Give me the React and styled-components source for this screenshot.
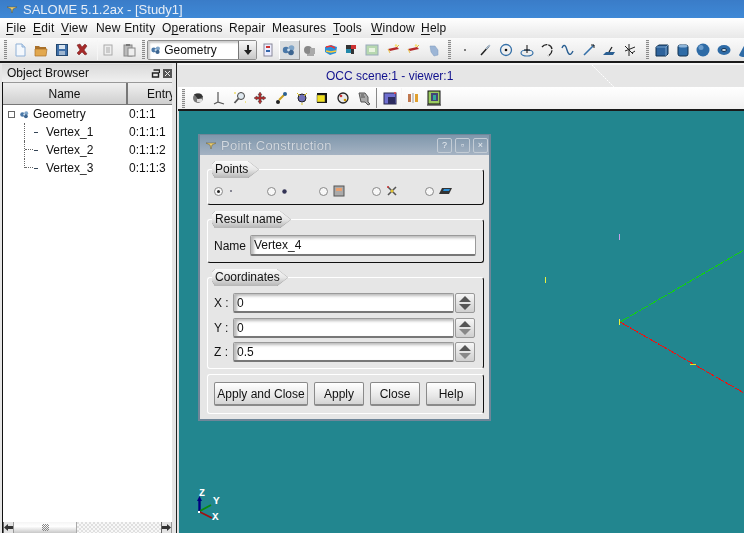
import React from "react";
import styled, { createGlobalStyle, css } from "styled-components";

const Global = createGlobalStyle`
  html, body { margin: 0; padding: 0; background: #e6e6e6; overflow: hidden; }
  #root { width: 744px; height: 533px; }
  * { box-sizing: border-box; }
`;

const soft = css`filter: blur(0.4px);`;

const Window = styled.div`
  position: relative; width: 744px; height: 533px; overflow: hidden;
  display: flex; flex-direction: column; background: #e6e6e6;
  font-family: "Liberation Sans", Arial, sans-serif; font-size: 12px; color: #111;
`;
const TitleBar = styled.div`
  height: 18px; flex: none; display: flex; align-items: center; padding-left: 7px; gap: 6px; ${soft}
  background: linear-gradient(#3a7cc8, #3f89d6); color: #e8eef6; font-size: 13px;
`;
const MenuBar = styled.div`
  height: 20px; flex: none; display: flex; align-items: center; padding-left: 6px; letter-spacing: 0.2px; ${soft}
  background: linear-gradient(#fff, #f1f1f1 60%, #e8e8e8); 
`;
const MenuItem = styled.span`
  width: ${p => p.$w}px; flex: none; white-space: nowrap;
  u { text-underline-offset: 2px; }
`;
const MainToolbar = styled.div`
  height: 25px; flex: none; display: flex; align-items: center; padding-left: 4px; ${soft}
  background: linear-gradient(#fafafa, #ededed 70%, #e4e4e4); border-bottom: 2px solid #1a1a1a;
`;
const Grip = styled.div`
  width: 3px; height: 19px; flex: none; margin-left: ${p => p.$ml || 0}px; margin-right: ${p => p.$mr || 0}px;
  background: repeating-linear-gradient(#8a8a8a 0 1px, #e8e8e8 1px 2px);
`;
const Sep = styled.div`
  width: 1px; height: ${p => p.$h || 20}px; flex: none; background: ${p => p.$c || "#bdbdbd"};
  margin-left: ${p => p.$ml || 0}px; margin-right: ${p => p.$mr || 0}px;
`;
const Tool = styled.div`
  width: ${p => p.$w || 20.7}px; height: ${p => (p.$active ? 20 : 18)}px; flex: none; display: flex;
  align-items: center; justify-content: center;
  ${p => p.$active && "background:#d9dde0; border:1px solid #fff; border-bottom-color:#999; border-right-color:#999;"}
  svg { display: block; }
`;
const Combo = styled.div`
  width: 110px; height: 20px; flex: none; margin-right: 1px; display: flex; align-items: stretch;
  border: 1px solid #8e8e8e; border-radius: 2px; background: #fff;
`;
const ComboText = styled.div`
  flex: 1; display: flex; align-items: center; gap: 2px; padding-left: 2px; font-size: 12px;
  box-shadow: inset 2px 2px 2px #ccc;
`;
const ComboArrow = styled.div`
  width: 18px; display: flex; align-items: center; justify-content: center;
  border-left: 1px solid #777; background: linear-gradient(#f8f8f8, #c8c8c8);
`;

const Body = styled.div`flex: 1; display: flex; min-height: 0;`;
const LeftPanel = styled.div`
  width: 177px; flex: none; display: flex; flex-direction: column; padding-left: 2px; ${soft}
  border-right: 1px solid #222; background: #e6e6e6;
`;
const DockHeader = styled.div`
  height: 18px; flex: none; display: flex; align-items: center; justify-content: space-between;
  margin: 1px 4px 0 0; padding: 0 0 0 5px; background: linear-gradient(#d9d9d9, #f0f0f0);
`;
const DockButtons = styled.div`display: flex; gap: 3px;`;
const Tree = styled.div`
  flex: 1; margin-right: 4px; display: flex; flex-direction: column; background: #fff;
  border-left: 1px solid #111; min-height: 0;
`;
const HeaderRow = styled.div`
  height: 23px; flex: none; display: flex; overflow: hidden; background: linear-gradient(#f0f0f0, #cfcfcf);
  border-bottom: 1px solid #777; border-top: 1px solid #999;
`;
const HeaderCell = styled.div`
  width: ${p => p.$w}px; flex: none; display: flex; align-items: center; padding-left: ${p => p.$pl || 0}px;
  justify-content: ${p => (p.$center ? "center" : "flex-start")};
  border-right: ${p => (p.$center ? "2px solid #777" : "none")}; white-space: nowrap;
`;
const Rows = styled.div`flex: 1;`;
const Row = styled.div`display: flex; height: 18px; align-items: center;`;
const NameCell = styled.div`width: 126px; flex: none; display: flex; align-items: center; height: 100%;`;
const EntryCell = styled.div`white-space: nowrap;`;
const Expander = styled.div`
  width: 7px; height: 7px; flex: none; margin: 0 4px 0 5px; border: 1px solid #666; background: #fff;
`;
const RowIcon = styled.span`display: flex; align-items: center; margin-right: 3px;`;
const Branch = styled.div`
  width: 10px; height: 100%; flex: none; margin-left: 21px; border-left: 1px dotted #666;
  ${p => p.$last && "height: 50%; align-self: flex-start;"}
  ${p => p.$stub && `&::after { content: ""; display: block; width: 8px; margin-top: 8px; border-top: 1px dotted #666; }`}
`;
const Dash = styled.span`width: 4px; height: 1px; flex: none; background: #345; margin-right: 8px;`;
const HScroll = styled.div`
  height: 11px; flex: none; display: flex; align-items: stretch; background:
    repeating-conic-gradient(#e0e0e0 0 25%, #f8f8f8 0 50%) 0 0 / 4px 4px;
`;
const ScrollArrow = styled.div`
  width: 11px; flex: none; display: flex; align-items: center; justify-content: center; background: #e3e3e3;
  border-left: 1px solid #666; border-right: 1px solid #999;
`;
const ScrollThumb = styled.div`
  width: 63px; flex: none; display: flex; align-items: center; justify-content: center;
  background: linear-gradient(#f5f5f5, #fff 40%, #c8c8c8); border-right: 1px solid #aaa;
`;
const ScrollDots = styled.div`
  width: 7px; height: 7px; background: repeating-conic-gradient(#888 0 25%, transparent 0 50%) 0 0 / 2px 2px;
`;
const ScrollGap = styled.div`flex: 1;`;

const RightPanel = styled.div`
  flex: 1; margin-left: 1px; display: flex; flex-direction: column; min-width: 0;
`;
const TabStrip = styled.div`
  height: 24px; flex: none; position: relative; display: flex; align-items: center; ${soft}
  padding: 0 0 1px 148px; background: #e6e6e6; border-top: 2px solid #f6f6f6; color: #12128e;
`;
const TabSlant = styled.svg`position: absolute; left: 414px; top: 0;`;
const ViewToolbar = styled.div`
  height: 24px; flex: none; display: flex; align-items: center; padding-left: 4px; ${soft}
  background: linear-gradient(#fff, #f1f1f1); border-bottom: 2px solid #1a1a1a; 
`;
const Canvas = styled.div`flex: 1; position: relative; background: #22868f; border-left: 1px solid #ddd;`;
const CanvasArt = styled.svg`position: absolute; left: 0; top: 0;`;

const Dialog = styled.div`
  position: absolute; left: 198px; top: 134px; width: 293px; height: 287px; display: flex; flex-direction: column; ${soft}
  background: #e6e6e6; border: 1px solid #6f8699; border-bottom-width: 2px; border-left-width: 2px; border-right-width: 2px;
`;
const DialogTitle = styled.div`
  height: 20px; flex: none; display: flex; align-items: center; padding: 0 1px 0 6px;
  background: linear-gradient(#7f97ac, #a5b3c3); color: #d2d9e0; letter-spacing: 0.25px; font-size: 13px;
`;
const DialogTitleText = styled.span`flex: 1; margin-left: 5px; text-shadow: 0 0 1px #6a7a8a;`;
const WinBtn = styled.div`
  width: 15px; height: 15px; flex: none; margin-left: 3px; display: flex; align-items: center; justify-content: center;
  border: 1px solid #c3ccd5; border-radius: 2px; color: #e8ecf0; font-size: 9px; letter-spacing: 0;
`;
const DialogBody = styled.div`flex: 1; display: flex; flex-direction: column; padding: 14px 5px 0 7px;`;
const Group = styled.div`
  height: ${p => p.$h}px; flex: none; margin-bottom: ${p => p.$mb || 0}px; display: flex; flex-direction: column;
  border: 1px solid #fff; border-right-color: #111; border-bottom-color: ${p => (p.$open ? "#fff" : "#111")}; border-radius: 3px;
`;
const GroupTabFrame = styled.div`
  align-self: flex-start; height: 17px; margin: -9px 0 0 4px; flex: none;
  filter: drop-shadow(0 0 0.6px #666);
`;
const GroupTab = styled.div`
  height: 17px; width: ${p => p.$w}px; display: flex; align-items: center; padding: 0 0 1px 3px;
  background: linear-gradient(#fafafa, #e6e6e6 50%, #b5b5b5);
  clip-path: polygon(3px 0, calc(100% - 11px) 0, 100% 50%, calc(100% - 11px) 100%, 3px 100%, 0 70%, 0 3px);
`;
const RadioRow = styled.div`display: flex; padding: 7px 0 0 6px; align-items: center;`;
const RadioItem = styled.div`width: 52.7px; flex: none; display: flex; align-items: center; gap: 5px;`;
const Radio = styled.div`
  width: 9px; height: 9px; flex: none; border-radius: 50%; border: 1px solid #888; background: #f7f7f7;
  display: flex; align-items: center; justify-content: center;
  &::after { content: ""; width: 3px; height: 3px; border-radius: 50%; background: ${p => (p.$on ? "#222" : "transparent")}; }
`;
const FieldRow = styled.div`
  display: flex; align-items: center; padding: ${p => p.$pt || 0}px 0 0 6px; height: ${p => p.$h || 25}px; flex: none;
`;
const FieldLabel = styled.span`width: ${p => p.$w}px; flex: none; white-space: pre;`;
const TextInput = styled.div`
  width: ${p => p.$w}px; height: ${p => p.$hh || 20}px; flex: none; display: flex; align-items: center; padding-left: 3px;
  background: #fff; border: 1px solid #9a9a9a; border-bottom: 2px solid #777; border-radius: 2px;
  box-shadow: inset 3px 2px 3px #bbb;
`;
const Spin = styled.div`
  width: 20px; height: 20px; flex: none; margin-left: 1px; display: flex; align-items: center; justify-content: center;
  border: 1px solid #999; border-radius: 2px; background: linear-gradient(#f6f6f6, #cfcfcf);
`;
const ButtonRow = styled.div`display: flex; gap: 6px; padding: 7px 0 0 6px;`;
const PushButton = styled.div`
  width: ${p => p.$w}px; height: 24px; flex: none; display: flex; align-items: center; justify-content: center;
  border: 1px solid #8a8a8a; border-bottom-width: 2px; border-radius: 2px; white-space: nowrap;
  background: linear-gradient(#fff, #e8e8e8 60%, #d4d4d4);
`;

const S = ({ children, w = 16, h = 16, vb }) => (
  <svg width={w} height={h} viewBox={vb || `0 0 ${w} ${h}`}>{children}</svg>
);

const icons = {
  doc: <><path d="M4 2h6l3 3v9H4z" fill="#f4f8fd" stroke="#8fb0d6" /><path d="M10 2v3h3" fill="#c9dcf0" stroke="#8fb0d6" /></>,
  open: <><path d="M2 4h4l1 1h6v2H2z" fill="#a9702a" /><path d="M2 7h12l-1 7H2z" fill="#e2a84f" stroke="#a9702a" strokeWidth=".7" /></>,
  save: <><rect x="2.5" y="2.5" width="11" height="11" fill="#3f6fa8" stroke="#23476f" /><rect x="5" y="3" width="6" height="4" fill="#d8e4f0" /><rect x="5" y="9" width="6" height="4" fill="#9fb6d0" /></>,
  del: <path d="M3 3l3-1 2 3 3-3 2 2-3 4 3 4-2 1-3-3-3 3-2-2 3-3z" fill="#a52a2a" stroke="#6e1a1a" strokeWidth=".5" />,
  copy: <><rect x="4" y="3" width="8" height="10" fill="#eee" stroke="#aaa" /><path d="M6 6h4M6 8h4M6 10h4" stroke="#aaa" /></>,
  paste: <><rect x="3" y="3" width="8" height="11" fill="#bbb" stroke="#888" /><rect x="7" y="6" width="7" height="8" fill="#eee" stroke="#888" /><rect x="5" y="2" width="4" height="2" fill="#777" /></>,
  study: <><rect x="4" y="2" width="8" height="12" fill="#eef" stroke="#889" /><rect x="6" y="4" width="4" height="2" fill="#c33" /><rect x="6" y="8" width="4" height="2" fill="#36a" /></>,
  geom: <><circle cx="5" cy="8" r="3.2" fill="#4a78a8" /><circle cx="10.5" cy="6" r="2.8" fill="#7ea4c8" /><circle cx="10" cy="10.5" r="2.8" fill="#3d6590" /><circle cx="7.5" cy="8" r="1.4" fill="#cfe0ee" /></>,
  smesh: <><circle cx="6" cy="8" r="4" fill="#888" /><path d="M8 6h5v6H8z" fill="#aaa" /><path d="M5 13h7" stroke="#666" /></>,
  post: <><path d="M2 5l6-2 6 2-1 6-6 2-5-3z" fill="#2a8fd8" /><path d="M3 5l5-1 4 2" stroke="#e33" fill="none" strokeWidth="1.5" /><path d="M3 9l5 1 5-1" stroke="#fc3" fill="none" strokeWidth="1.5" /></>,
  dash: <><rect x="3" y="3" width="5" height="4" fill="#333" /><rect x="8" y="3" width="5" height="4" fill="#c33" /><rect x="3" y="7" width="5" height="4" fill="#28a" /><rect x="8" y="7" width="3" height="5" fill="#333" /></>,
  green: <><rect x="2" y="3" width="12" height="10" fill="#b7d8b0" stroke="#9ab" /><rect x="5" y="6" width="6" height="4" fill="#e8f4e0" /></>,
  red1: <><path d="M3 7l9-2 2 2-9 2z" fill="#b52a2a" /><path d="M3 7l2 4M12 5l2-2" stroke="#e8c040" /><circle cx="11" cy="3.5" r="1.2" fill="#f6e070" /></>,
  blob: <><path d="M4 4l5 0 3 4 0 5-4 1-3-4z" fill="#9db6d6" stroke="#7f9abd" strokeWidth=".5" /></>,
  point: <circle cx="8" cy="8" r="1" fill="#555" />,
  line: <><path d="M4 13L12 4" stroke="#222" strokeWidth="1.5" /><path d="M9 7L13 3" stroke="#a8bcd0" strokeWidth="1.4" /></>,
  circle: <><circle cx="8" cy="8" r="5.5" fill="none" stroke="#3570a8" strokeWidth="1.3" /><circle cx="8" cy="8" r="1.3" fill="#111" /></>,
  ellipse: <><ellipse cx="8" cy="11" rx="6" ry="3" fill="none" stroke="#3570a8" strokeWidth="1.2" /><path d="M8 3v8M5 8h6" stroke="#111" /></>,
  arc: <path d="M3 5C6 1 13 2 13 8c0 3-2 5-4 6" fill="none" stroke="#222" strokeWidth="1.3" strokeDasharray="6 1" />,
  curve: <path d="M2 6c2-5 4-2 5 2s3 7 6 1" fill="none" stroke="#2a5f92" strokeWidth="1.4" />,
  vector: <><path d="M3 13L13 3" stroke="#3570a8" strokeWidth="1.6" /><path d="M10 3h3v3" fill="none" stroke="#222" /></>,
  plane: <><path d="M2 13l3-3h9l-2 3z" fill="#2a5f92" /><path d="M8 10l3-5" stroke="#222" strokeWidth="1.3" /></>,
  lcs: <path d="M7 2v12M3 9l10-4M3 4l8 8M13 9l-3 2" fill="none" stroke="#222" strokeWidth="1" />,
  box: <><path d="M2 5l3-2h9v9l-2 2H2z" fill="#2e639c" stroke="#10304f" /><path d="M2 5h10v9M12 5l2-2" fill="none" stroke="#8db4d8" strokeWidth=".8" /></>,
  cyl: <><rect x="3" y="3" width="10" height="11" rx="2" fill="#2e6ba6" stroke="#10304f" /><ellipse cx="8" cy="4" rx="4.6" ry="1.6" fill="#8db4d8" /></>,
  sphere: <><circle cx="8" cy="8" r="6.5" fill="#2e6ba6" /><circle cx="6" cy="5.5" r="2.5" fill="#6a9bca" /></>,
  torus: <><ellipse cx="8" cy="8" rx="6.5" ry="5" fill="#2e6ba6" /><ellipse cx="8" cy="8" rx="2.5" ry="1.5" fill="#d8e4ee" stroke="#10304f" /></>,
  cone: <><path d="M8 2l6 11a6 2 0 0 1-12 0z" fill="#2e6ba6" /></>,
  rotate: <><circle cx="8" cy="8" r="5" fill="#777" /><path d="M4 4h7l2 3-5 2z" fill="#333" /><path d="M7 9h5v3H7z" fill="#ddd" /></>,
  axes: <path d="M7 2v10l6 2M7 12l-4 2" fill="none" stroke="#555" strokeWidth="1.2" />,
  zoom: <><circle cx="9" cy="6" r="3.5" fill="#dfe8ef" stroke="#444" /><path d="M6.5 8.5L2.5 13" stroke="#555" strokeWidth="1.8" /><path d="M2 3h2M13 12h1" stroke="#e8d020" strokeWidth="1.2" /></>,
  pan: <><path d="M8 2l2 3H9v2h2V6l3 2-3 2V9H9v2h1l-2 3-2-3h1V9H5v1L2 8l3-2v1h2V5H6z" fill="#b32a2a" stroke="#444" strokeWidth=".5" /></>,
  fit: <><circle cx="5" cy="12" r="2" fill="#222" /><path d="M6 10l5-5" stroke="#c9a020" strokeWidth="2" /><circle cx="12" cy="4" r="2" fill="#2a5f92" /></>,
  globe: <><circle cx="8" cy="8" r="4" fill="#7070b8" stroke="#222" /><path d="M3 3l3 3M13 3l-3 3M8 13v2" stroke="#d8c020" /></>,
  yellow: <><rect x="3" y="3" width="10" height="10" fill="#111" /><rect x="3" y="5" width="8" height="7" fill="#f0e020" stroke="#444" strokeWidth=".5" /></>,
  rot2: <><circle cx="8" cy="8" r="5" fill="#e8e8e8" stroke="#222" strokeWidth="1.3" /><circle cx="6" cy="6" r="1.3" fill="#c33" /><circle cx="10" cy="10" r="1.3" fill="#c90" /></>,
  hand: <><path d="M3 3h6l3 4v5l2 2-2 1-3-3H5z" fill="#aaa" stroke="#555" /><path d="M5 5h3M5 7h4" stroke="#555" /></>,
  cube2: <><rect x="2" y="3" width="12" height="11" fill="#6f6fd0" stroke="#26264a" /><rect x="6" y="7" width="7" height="7" fill="#2d2d60" /><circle cx="13" cy="3" r="1" fill="#e44" /></>,
  clip: <><rect x="3" y="4" width="3" height="8" fill="#c07850" /><rect x="10" y="4" width="3" height="8" fill="#e0a030" /><path d="M8 3v10" stroke="#999" /></>,
  bars: <><rect x="2" y="1" width="12" height="13" fill="#9bcb60" stroke="#111" /><rect x="5" y="3" width="7" height="8" fill="#447" /><rect x="7" y="5" width="3" height="5" fill="#3a9" /><path d="M1 15h14" stroke="#111" /></>,
};

const Ic = ({ n }) => <S>{icons[n]}</S>;

const Logo = () => (
  <svg width="10" height="7" viewBox="0 0 10 7"><path d="M0 1h10L6 3 5 7 4 3z" fill="#e8cc70" stroke="#5a4a1a" strokeWidth=".4" /></svg>
);

const Down = () => <svg width="12" height="12" viewBox="0 0 12 12"><path d="M5 1h2v5h3L6 11 2 6h3z" fill="#222" /></svg>;
const Arrow = ({ dir }) => (
  <svg width="9" height="7" viewBox="0 0 9 7">
    <path d={dir === "l" ? "M0 3.5L4 0v2h5v3H4v2z" : "M9 3.5L5 0v2H0v3h5v2z"} fill="#333" />
  </svg>
);
const SpinArrows = ({ strong }) => (
  <svg width="14" height="16" viewBox="0 0 14 16">
    <path d="M7 1L13 7H1z" fill="#555" /><path d="M7 15L13 9H1z" fill={strong ? "#555" : "#888"} />
  </svg>
);

const Scene = () => (
  <CanvasArt width="565" height="422" viewBox="0 0 565 422">
    <g transform="translate(-179 -111)">
      <path d="M199.5 512V499" stroke="#000080" strokeWidth="2.4" />
      <path d="M199.5 496l-2.5 5h5z" fill="#000080" />
      <path d="M200 511l11-6" stroke="#0a8a0a" strokeWidth="1.8" />
      <path d="M200 512l12 6" stroke="#a01010" strokeWidth="1.8" />
      <rect x="198" y="511" width="2" height="2" fill="#fff" />
      <text x="199" y="496" fill="#fff" fontSize="10" fontWeight="700" fontFamily="Liberation Mono, monospace">Z</text>
      <text x="213" y="504" fill="#fff" fontSize="11" fontWeight="700" fontFamily="Liberation Mono, monospace">Y</text>
      <text x="212" y="520" fill="#fff" fontSize="11" fontWeight="700" fontFamily="Liberation Mono, monospace">X</text>
      <g shapeRendering="crispEdges">
        <path d="M620 322L744 250" stroke="#12d012" strokeDasharray="10 1" />
        <path d="M620 322L744 393" stroke="#f01010" strokeDasharray="10 1" />
        <path d="M619.5 319v6" stroke="#e8f040" />
        <path d="M619.5 234v6" stroke="#c8a0e8" />
        <path d="M545.5 277v6" stroke="#e8f040" />
        <path d="M690 364.5h6" stroke="#f0e020" />
      </g>
    </g>
  </CanvasArt>
);

const mainA = ["doc", "open", "save", "del"];
const mainC = ["smesh", "post", "dash", "green", "red1", "red1", "blob"];
const mainD = ["point", "line", "circle", "ellipse", "arc", "curve", "vector", "plane", "lcs"];
const mainE = ["box", "cyl", "sphere", "torus", "cone"];
const viewA = ["rotate", "axes", "zoom", "pan", "fit", "globe", "yellow", "rot2", "hand"];

export default function App() {
  return (
    <Window>
      <Global />
      <TitleBar><Logo /><span>SALOME 5.1.2ax - [Study1]</span></TitleBar>
      <MenuBar>
        <MenuItem $w={27}><u>F</u>ile</MenuItem>
        <MenuItem $w={28}><u>E</u>dit</MenuItem>
        <MenuItem $w={35}><u>V</u>iew</MenuItem>
        <MenuItem $w={66}>New Entity</MenuItem>
        <MenuItem $w={67}>O<u>p</u>erations</MenuItem>
        <MenuItem $w={43}>Repair</MenuItem>
        <MenuItem $w={61}>Measures</MenuItem>
        <MenuItem $w={38}><u>T</u>ools</MenuItem>
        <MenuItem $w={50}><u>W</u>indow</MenuItem>
        <MenuItem $w={30}><u>H</u>elp</MenuItem>
      </MenuBar>
      <MainToolbar>
        <Grip $mr={3} />
        {mainA.map((n, i) => <Tool key={i}><Ic n={n} /></Tool>)}
        <Sep $ml={4} $c="#f6f6f6" />
        <Tool><Ic n="copy" /></Tool>
        <Tool><Ic n="paste" /></Tool>
        <Grip $ml={3} $mr={2} />
        <Combo>
          <ComboText><S w={12} h={12} vb="0 0 16 16">{icons.geom}</S><span>Geometry</span></ComboText>
          <ComboArrow><Down /></ComboArrow>
        </Combo>
        <Tool><Ic n="study" /></Tool>
        <Tool $active><Ic n="geom" /></Tool>
        {mainC.map((n, i) => <Tool key={i}><Ic n={n} /></Tool>)}
        <Grip $ml={4} $mr={3} />
        {mainD.map((n, i) => <Tool key={i}><Ic n={n} /></Tool>)}
        <Grip $ml={5} $mr={3} />
        {mainE.map((n, i) => <Tool key={i}><Ic n={n} /></Tool>)}
      </MainToolbar>
      <Body>
        <LeftPanel>
          <DockHeader>
            <span>Object Browser</span>
            <DockButtons>
              <S w={9} h={9}><path d="M1.5 4h6v4h-6zM2.5 1h6v3" fill="none" stroke="#222" strokeWidth="1.4" /></S>
              <S w={9} h={9}><rect width="9" height="9" fill="#555" /><path d="M2 2l5 5M7 2L2 7" stroke="#eee" /></S>
            </DockButtons>
          </DockHeader>
          <Tree>
            <HeaderRow>
              <HeaderCell $w={125} $center>Name</HeaderCell>
              <HeaderCell $w={44} $pl={19}>Entry</HeaderCell>
            </HeaderRow>
            <Rows>
              <Row>
                <NameCell>
                  <Expander />
                  <RowIcon><S w={11} h={11} vb="0 0 16 16">{icons.geom}</S></RowIcon>
                  <span>Geometry</span>
                </NameCell>
                <EntryCell>0:1:1</EntryCell>
              </Row>
              {["Vertex_1", "Vertex_2", "Vertex_3"].map((v, i) => (
                <Row key={v}>
                  <NameCell>
                    <Branch $stub={i > 0} $last={i === 2} />
                    <Dash />
                    <span>{v}</span>
                  </NameCell>
                  <EntryCell>0:1:1:{i + 1}</EntryCell>
                </Row>
              ))}
            </Rows>
            <HScroll>
              <ScrollArrow><Arrow dir="l" /></ScrollArrow>
              <ScrollThumb><ScrollDots /></ScrollThumb>
              <ScrollGap />
              <ScrollArrow><Arrow dir="r" /></ScrollArrow>
            </HScroll>
          </Tree>
        </LeftPanel>
        <RightPanel>
          <TabStrip>
            OCC scene:1 - viewer:1
            <TabSlant width="24" height="24" viewBox="0 0 24 24"><path d="M0 0L22 22" stroke="#fff" strokeDasharray="2 1" /></TabSlant>
          </TabStrip>
          <ViewToolbar>
            <Grip $mr={3} />
            {viewA.map((n, i) => <Tool key={i}><Ic n={n} /></Tool>)}
            <Sep $c="#888" $ml={2} $mr={2} />
            <Tool><Ic n="cube2" /></Tool>
            <Sep $c="#f6f6f6" $ml={1} $mr={1} />
            <Tool><Ic n="clip" /></Tool>
            <Tool><Ic n="bars" /></Tool>
          </ViewToolbar>
          <Canvas><Scene /></Canvas>
        </RightPanel>
      </Body>
      <Dialog>
        <DialogTitle>
          <Logo />
          <DialogTitleText>Point Construction</DialogTitleText>
          <WinBtn>?</WinBtn>
          <WinBtn>▫</WinBtn>
          <WinBtn>×</WinBtn>
        </DialogTitle>
        <DialogBody>
          <Group $h={36} $mb={14}>
            <GroupTabFrame><GroupTab $w={47}>Points</GroupTab></GroupTabFrame>
            <RadioRow>
              <RadioItem><Radio $on /><S w={6} h={6}><circle cx="3" cy="3" r="1" fill="#667" /></S></RadioItem>
              <RadioItem><Radio /><S w={7} h={7}><circle cx="3.5" cy="3.5" r="2.2" fill="#335" /></S></RadioItem>
              <RadioItem><Radio /><S w={12} h={12}><rect x="1" y="1" width="10" height="10" fill="#aaa" stroke="#555" /><rect x="3" y="3" width="6" height="3" fill="#e8a070" /></S></RadioItem>
              <RadioItem><Radio /><S w={12} h={12}><path d="M2 2l8 8M10 2l-8 8" stroke="#555" strokeWidth="1.6" /><circle cx="6" cy="6" r="1.5" fill="#e0c030" /><circle cx="2" cy="2" r="1" fill="#c33" /></S></RadioItem>
              <RadioItem><Radio /><S w={14} h={8}><path d="M3 1h10l-3 6H0z" fill="#333" /><path d="M5 2h6l-1 2H4z" fill="#2a8fd8" /></S></RadioItem>
            </RadioRow>
          </Group>
          <Group $h={44} $mb={14}>
            <GroupTabFrame><GroupTab $w={79}>Result name</GroupTab></GroupTabFrame>
            <FieldRow $h={28} $pt={7}>
              <FieldLabel $w={36}>Name</FieldLabel>
              <TextInput $w={226} $hh={21}>Vertex_4</TextInput>
            </FieldRow>
          </Group>
          <Group $h={92} $mb={5} $open>
            <GroupTabFrame><GroupTab $w={76}>Coordinates</GroupTab></GroupTabFrame>
            <FieldRow $h={27} $pt={7}>
              <FieldLabel $w={19}>X :</FieldLabel>
              <TextInput $w={221}>0</TextInput>
              <Spin><SpinArrows strong /></Spin>
            </FieldRow>
            <FieldRow $h={25} $pt={5}>
              <FieldLabel $w={19}>Y :</FieldLabel>
              <TextInput $w={221}>0</TextInput>
              <Spin><SpinArrows /></Spin>
            </FieldRow>
            <FieldRow $h={24} $pt={4}>
              <FieldLabel $w={19}>Z :</FieldLabel>
              <TextInput $w={221}>0.5</TextInput>
              <Spin><SpinArrows /></Spin>
            </FieldRow>
          </Group>
          <Group $h={40} $open>
            <ButtonRow>
              <PushButton $w={94}>Apply and Close</PushButton>
              <PushButton $w={50}>Apply</PushButton>
              <PushButton $w={50}>Close</PushButton>
              <PushButton $w={50}>Help</PushButton>
            </ButtonRow>
          </Group>
        </DialogBody>
      </Dialog>
    </Window>
  );
}
